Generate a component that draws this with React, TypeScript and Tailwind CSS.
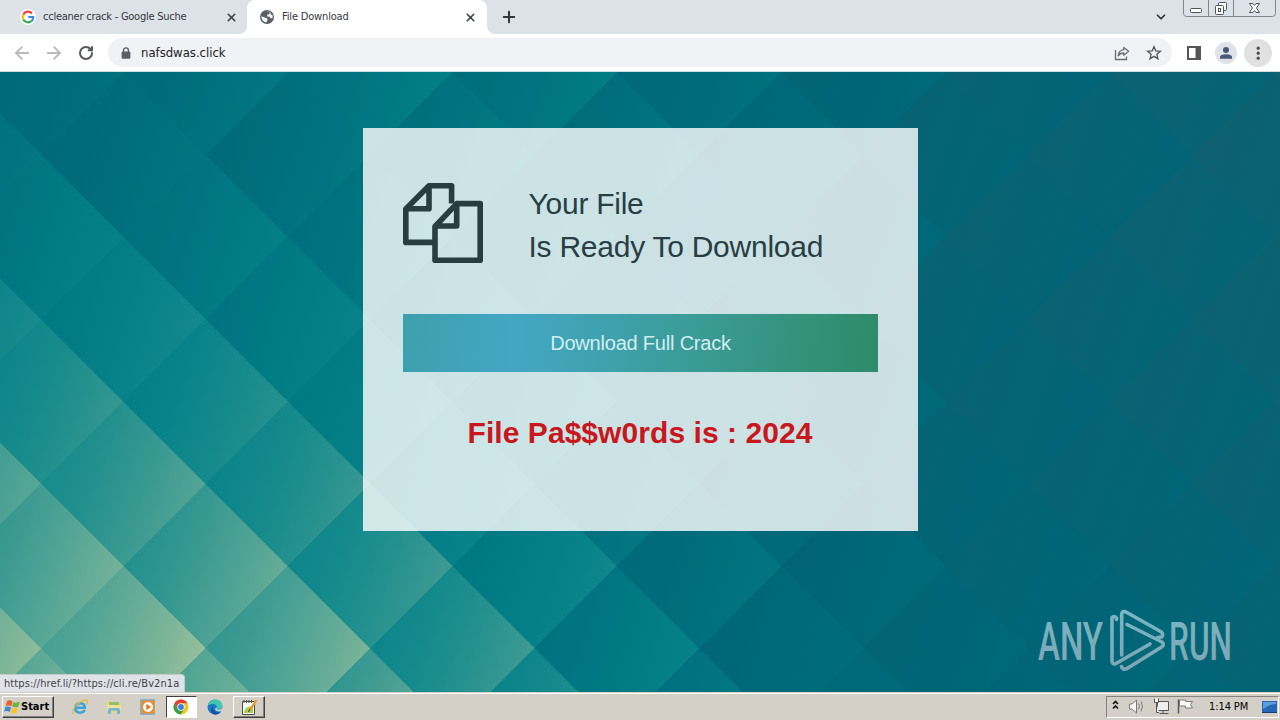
import React from "react";
import { ChevronDown, Plus, RotateCw, X } from "lucide-react";

// background lattice
const STEP = 164.5;
const COLS = [41, 205, 370, 534, 699, 863, 1028, 1192, 1356];
const ROWS = [72, 154, 320, 483, 648, 730];
const TONES = [
  [3.3, 3.5, 4.4, 4.6, 4, 3, 2.2, 1.9, 1.6],
  [3.9, 3.8, 4, 4.3, 4, 3.1, 2.1, 2, 1.6],
  [5.8, 5.6, 5, 4.7, 4, 3, 2, 1.9, 1.7],
  [8, 7.8, 6.9, 5.4, 4.2, 3, 2.2, 2.1, 1.9],
  [9.7, 9.9, 9, 7.1, 4.8, 3.1, 2.6, 2.5, 2.2],
  [10, 10, 9.4, 7.8, 5.4, 3.5, 2.8, 2.6, 2.3],
];
const PALETTE = [
  [27, 93, 107],
  [14, 97, 112],
  [0, 101, 119],
  [0, 108, 123],
  [0, 121, 131],
  [8, 131, 138],
  [29, 142, 141],
  [60, 154, 146],
  [90, 168, 150],
  [122, 180, 152],
  [153, 192, 154],
];

function locate(list: number[], v: number): [number, number] {
  const c = Math.min(Math.max(v, list[0]), list[list.length - 1]);
  let i = 0;
  while (i < list.length - 2 && c > list[i + 1]) i++;
  return [i, (c - list[i]) / (list[i + 1] - list[i])];
}

function toneAt(x: number, y: number): number {
  const [c, fx] = locate(COLS, x);
  const [r, fy] = locate(ROWS, y);
  const top = TONES[r][c] * (1 - fx) + TONES[r][c + 1] * fx;
  const bottom = TONES[r + 1][c] * (1 - fx) + TONES[r + 1][c + 1] * fx;
  return top * (1 - fy) + bottom * fy;
}

function color(t: number): string {
  const c = Math.min(Math.max(t, 0), 9.999);
  const i = Math.floor(c);
  const f = c - i;
  const rgb = PALETTE[i].map((v, k) =>
    Math.round(v * (1 - f) + PALETTE[i + 1][k] * f),
  );
  return `rgb(${rgb.join(",")})`;
}

const diamonds: { x: number; y: number; hi: number; lo: number }[] = [];
for (let row = -1; row < 10; row++) {
  const y = 72.3 + row * 82.3;
  const shift = row % 2 === 0 ? STEP / 2 : 0;
  for (let col = 0; col < 10; col++) {
    const x = 41 - shift + col * STEP;
    const hi = toneAt(x, y);
    diamonds.push({ x, y, hi, lo: hi - (hi * 0.24 + 0.2) });
  }
}

function Backdrop() {
  const h = STEP / 2 + 0.1;
  return (
    <svg
      className="absolute inset-0 h-full w-full"
      viewBox="0 72 1280 620"
      preserveAspectRatio="none"
      shapeRendering="crispEdges"
    >
      <defs>
        {diamonds.map(({ x, y, hi, lo }, idx) => (
          <linearGradient
            key={idx}
            id={`d${idx}`}
            gradientUnits="userSpaceOnUse"
            x1={x - STEP}
            y1={y}
            x2={x - STEP + 147}
            y2={y + 51}
          >
            {[0, 0.25, 0.5, 0.75, 1].map((s) => (
              <stop
                key={s}
                offset={s}
                stopColor={color(lo + (hi - lo) * Math.pow(s, 1.25))}
              />
            ))}
          </linearGradient>
        ))}
      </defs>
      {diamonds.map(({ x, y }, idx) => (
        <path
          key={idx}
          fill={`url(#d${idx})`}
          d={`M${x - STEP} ${y}L${x - STEP / 2} ${y - h}L${x} ${y}L${x - STEP / 2} ${y + h}Z`}
        />
      ))}
    </svg>
  );
}

function GoogleIcon() {
  return (
    <svg className="size-4" viewBox="0 0 16 16">
      <circle cx="8" cy="8" r="8" fill="#fff" />
      <g fill="none" strokeWidth="2.2">
        <path d="M12 4.4A5.4 5.4 0 0 0 3.3 5.4" stroke="#ea4335" />
        <path d="M3.3 5.4A5.4 5.4 0 0 0 3.3 10.6" stroke="#fbbc05" />
        <path d="M3.3 10.6A5.4 5.4 0 0 0 11.6 12" stroke="#34a853" />
        <path d="M11.6 12A5.2 5.2 0 0 0 13.2 8H8.2" stroke="#4285f4" />
      </g>
    </svg>
  );
}

function GlobeIcon() {
  return (
    <svg className="size-4" viewBox="0 0 16 16">
      <circle cx="8" cy="8" r="7" fill="#5a5e63" />
      <path
        d="M2.4 7.2L5.8 8.6L8 9.2L8.6 11L7.2 13.6A5.8 5.8 0 0 1 2.4 7.2ZM7.4 2.6Q9.2 2.2 11 3L10.4 5L8.2 5.8L8 7.4L10.6 7.8L11.6 9.6L13.6 9A5.8 5.8 0 0 0 13.4 6L11.8 5.6L11.6 3.4Z"
        fill="#f4f5f6"
      />
    </svg>
  );
}

function TabStrip() {
  return (
    <header className="flex h-[34px] bg-[#dde1e8] text-[11px] text-[#35383c]">
      <div className="flex w-[239px] items-center pl-5">
        <GoogleIcon />
        <span className="ml-[7px] w-[182px] tracking-[-0.24px] whitespace-nowrap">
          ccleaner crack - Google Suche
        </span>
        <X className="size-[13px] shrink-0 text-[#3c4043]" strokeWidth={3} />
      </div>
      <div className="w-2 self-end bg-white">
        <div className="h-2 rounded-br-lg bg-[#dde1e8]" />
      </div>
      <div className="flex w-60 items-center rounded-t-lg bg-white pl-3">
        <GlobeIcon />
        <span className="ml-[7px] w-[182px] tracking-[-0.17px] whitespace-nowrap">
          File Download
        </span>
        <X className="size-[13px] shrink-0 text-[#3c4043]" strokeWidth={3} />
      </div>
      <div className="w-2 self-end bg-white">
        <div className="h-2 rounded-bl-lg bg-[#dde1e8]" />
      </div>
      <div className="flex flex-1 items-center pl-[5px]">
        <Plus className="size-[18px] text-[#33363a]" strokeWidth={2.7} />
      </div>
      <ChevronDown
        className="mt-[10px] mr-[15px] size-[14px] text-[#33363a]"
        strokeWidth={3}
      />
      <WindowButtons />
    </header>
  );
}

function WindowButtons() {
  return (
    <svg className="mr-1 h-[18px] w-[93px]" viewBox="0 0 93 18" fill="none">
      <path
        d="M.5 0V13.5Q.5 16.5 3.5 16.5H89.5Q92.5 16.5 92.5 13.5V0M25.5 0V16M50.5 0V16"
        stroke="#83868c"
      />
      <g stroke="#50545b" fill="#fff">
        <rect x="7.5" y="8.5" width="11" height="4" rx="1" />
        <rect x="35.5" y="2.5" width="8" height="8" rx="1" />
        <rect x="32.5" y="5.5" width="8" height="9" rx="1" />
        <rect x="35.5" y="8.5" width="2" height="3" />
        <path d="M66.5 3.5H70L71.5 5.5L73 3.5H76.5L73.5 8L76.5 12.5H73L71.5 10.5L70 12.5H66.5L69.5 8Z" />
      </g>
    </svg>
  );
}

function Toolbar() {
  return (
    <nav className="flex h-[38px] items-center border-b border-[#d5dcdd] bg-white">
      <svg className="ml-[14px] h-4 w-12" viewBox="0 0 48 16" fill="none">
        <path
          d="M15 8H2M8.3 1.7L2 8L8.3 14.3M33 8H46M39.7 1.7L46 8L39.7 14.3"
          stroke="#b9bbbe"
          strokeWidth="1.9"
        />
      </svg>
      <RotateCw
        className="ml-4 size-4 text-[#55595e]"
        strokeWidth={3}
      />
      <div className="ml-[14px] flex h-[29px] w-[1064px] items-center rounded-full bg-[#f0f2f5] pr-[10px] pl-[13px]">
        <svg className="h-3 w-[10px]" viewBox="0 0 10 12">
          <path d="M2.6 5V3.3a2.4 2.4 0 0 1 4.8 0V5" fill="none" stroke="#5c6065" strokeWidth="1.4" />
          <rect x=".6" y="4.4" width="8.8" height="7.4" rx="1" fill="#5c6065" />
        </svg>
        <span className="ml-[10px] flex-1 text-[13px] tracking-[-0.02px] text-[#202124]">
          nafsdwas.click
        </span>
        <svg className="mr-4 -ml-px size-4" viewBox="0 0 16 16" fill="none" stroke="#6a6d72" strokeWidth="1.3">
          <path d="M1.5 5V14.5H12.5V11.5" />
          <path d="M9.8 2.5L14.6 6.3L9.8 10.2V8Q6.2 7.8 4.2 10.8Q4.8 5.2 9.8 4.7Z" strokeLinejoin="round" />
        </svg>
        <svg className="size-4" viewBox="0 0 16 16" fill="none">
          <path
            d="M8 1.8L9.8 5.9L14.3 6.3L10.9 9.3L11.9 13.7L8 11.3L4.1 13.7L5.1 9.3L1.7 6.3L6.2 5.9Z"
            stroke="#55595e"
            strokeWidth="1.4"
          />
        </svg>
      </div>
      <svg className="ml-[15px] h-[14px] w-[14px]" viewBox="0 0 14 14">
        <path fill="#55565a" fillRule="evenodd" d="M0 0H14V14H0ZM2 2V12H8.5V2Z" />
      </svg>
      <svg className="ml-[14px] size-[22px]" viewBox="0 0 22 22">
        <circle cx="11" cy="11" r="11" fill="#dfe2e7" />
        <circle cx="11" cy="8" r="3" fill="#4a5878" />
        <path d="M5 16.8V15Q5 12.4 11 12.2Q17 12.4 17 15V16.8Z" fill="#4a5878" />
      </svg>
      <svg className="ml-[7px] size-7" viewBox="0 0 28 28">
        <circle cx="14" cy="14" r="14" fill="#e1e1e1" />
        <g fill="#4b4c4f">
          <circle cx="14.2" cy="9.2" r="1.6" />
          <circle cx="14.2" cy="14.2" r="1.6" />
          <circle cx="14.2" cy="19.2" r="1.6" />
        </g>
      </svg>
    </nav>
  );
}

function FilesIcon() {
  return (
    <svg
      className="mt-px size-20"
      viewBox="0 0 80 80"
      fill="none"
      stroke="#273e41"
      strokeWidth="5.6"
      strokeLinejoin="round"
    >
      <path d="M48.6 20.5V2.8H26L2.8 26V59.4H32M26 2.8V25.7H2.8" />
      <path d="M53.7 20.6H77.2V77.2H32V43.5L53.7 20.6V43H32" />
    </svg>
  );
}

function DownloadCard() {
  return (
    <main className="relative h-[403px] w-[555px] bg-white/80 px-10 pt-[54px] font-['Liberation_Sans',Arial,sans-serif]">
      <div className="flex">
        <FilesIcon />
        <h1 className="ml-[46px] text-[30px] leading-[43px] tracking-[-0.25px] whitespace-nowrap text-[#273e43]">
          Your File
          <br />
          Is Ready To Download
        </h1>
      </div>
      <button className="mt-[46px] block h-[58px] w-full bg-[linear-gradient(97deg,#3da0ad_0%,#43a7c4_24%,#3b9c98_60%,#2f8c6a_97%)] pl-px text-xl tracking-[-0.2px] text-[#d2eef1]">
        Download Full Crack
      </button>
      <p className="mt-[43px] text-center text-[30px] leading-9 font-bold tracking-[0.06px] whitespace-nowrap text-[#c9171e]">
        File Pa$$w0rds is : 2024
      </p>
    </main>
  );
}

function Watermark() {
  return (
    <svg className="absolute right-0 bottom-[18px] h-[66px] w-[245px]" viewBox="0 0 245 66">
      <defs>
        <linearGradient id="wm" gradientUnits="userSpaceOnUse" x1="0" y1="0" x2="0" y2="66">
          <stop offset="0" stopColor="#79b7c2" />
          <stop offset="1" stopColor="#7fa3b3" />
        </linearGradient>
      </defs>
      <g
        fill="url(#wm)"
        fontFamily="Roboto, sans-serif"
        fontSize="53.5"
        fontWeight="500"
      >
        <text x="3" y="51.5" textLength="65" lengthAdjust="spacingAndGlyphs">
          ANY
        </text>
        <text x="134" y="51.5" textLength="63" lengthAdjust="spacingAndGlyphs">
          RUN
        </text>
      </g>
      <g fill="none" stroke="url(#wm)" strokeWidth="3.6" strokeLinejoin="round" strokeLinecap="round">
        <path d="M81.5 11.5V10Q79 7.500 77 9.500V53.500Q77.500 57 81 55.500L115 36" />
        <path d="M86.700 47V6Q87.500 2.500 91 4L126.500 24Q129 27 126.500 29L122.500 29.500" />
        <path d="M92 16.500L127 34Q129.500 36.500 127 38.800L92 60.500Q87.500 62.500 86.500 58.500" />
      </g>
    </svg>
  );
}

function Tray() {
  return (
    <div className="mr-px flex h-[22px] w-[173px] items-center border border-t-[#86837c] border-r-white border-b-white border-l-[#86837c] text-[11px]">
      <svg className="mt-px ml-1 h-5 w-[84px]" viewBox="0 0 84 20" fill="none">
        <path d="M2 7L4.500 4.500L7 7M2 11.500L4.500 9L7 11.500" stroke="#111" strokeWidth="1.6" />
        <g stroke="#77797a">
          <path d="M18.500 7H21L25.500 3V16L21 12H18.500Z" fill="#f7f7f7" />
          <path d="M27.500 6.500Q29.500 9.500 27.500 12.500M30 4.500Q33 9.500 30 14.500" />
          <path d="M46.500 4.500H57.500V13.500H46.500ZM48.500 16.500H57.500M52 14V16" fill="#eee" stroke="#55585a" />
          <path d="M43.500 1.500V5.500H47.500V1.500M45.500 6V15.500H48" fill="#f5f5f5" stroke="#55585a" />
          <path d="M67.500 2.500V16.500" stroke="#55585a" strokeWidth="1.500" />
          <path d="M68.500 3H74.500V4.500H81.500L79.500 7.500L81.500 11H74.500V9H68.500Z" fill="#fafafa" />
        </g>
      </svg>
      <span className="ml-[14px] w-[50px] pt-[2px] tracking-[-0.1px] whitespace-nowrap text-black">1:14 PM</span>
      <svg className="ml-auto size-4" viewBox="0 0 16 16">
        <rect x="0" y="2" width="15" height="11" fill="#2467b5" />
        <path d="M1 3H14V5Q8 5 1 10Z" fill="#5d9ddb" />
        <path d="M0 13H15V14H0Z" fill="#173e70" />
      </svg>
    </div>
  );
}

function Taskbar() {
  return (
    <footer className="flex h-7 items-center border-t border-[#d4d0c8] bg-[#d4d0c8] shadow-[inset_0_1px_0_#fff]">
      <button className="ml-[2px] flex h-[22px] w-[52px] items-center border border-t-white border-r-[#404040] border-b-[#404040] border-l-white pl-px text-[11px] font-bold text-black shadow-[inset_-1px_-1px_0_#808080]">
        <svg className="size-4 shrink-0" viewBox="0 0 16 16">
          <path d="M3 2Q6 .5 8.500 2.500L7.300 7.300Q5 5.800 1.800 6.800Z" fill="#e8602c" />
          <path d="M9.300 3Q12 4.500 15.800 2.500L14.300 7.700Q11.300 9 8.100 7.600Z" fill="#6db33f" />
          <path d="M1.500 7.800Q4.700 6.800 7 8.400L5.800 13Q3.300 11.500 .2 12.500Z" fill="#3c8ad0" />
          <path d="M7.900 8.800Q11 10.200 14 8.800L12.700 13.800Q9.500 15 6.700 13.500Z" fill="#f5c32c" />
        </svg>
        <span className="pt-[2px] pl-px">Start</span>
      </button>
      <svg className="ml-[17px] size-[18px]" viewBox="0 0 18 18" fill="none">
        <path d="M4.300 9.800H13.800Q14 5.200 9.200 5.200Q4.300 5.500 4.300 10Q4.500 14.500 9.200 14.700Q12.500 14.500 13.800 12" stroke="#39a3dc" strokeWidth="2.600" />
        <path d="M2.500 16Q0 14.500 4 8.500Q10 2 15.500 2Q17.500 3 15 6.500" stroke="#e4b93c" strokeWidth="1.300" />
      </svg>
      <svg className="ml-4 size-[18px]" viewBox="0 0 18 18">
        <path d="M2 3H8L9 5H16V15H2Z" fill="#edd477" />
        <path d="M4 4H14V7H4Z" fill="#8ac26d" />
        <path d="M2 7H16V12H2Z" fill="#f3e196" />
        <path d="M3 16V12Q3 10 5 10H13Q15 10 15 12V16H12V12.500H6V16Z" fill="#73b4de" />
      </svg>
      <svg className="ml-4 size-[18px]" viewBox="0 0 18 18">
        <rect x="1" y="1" width="15" height="16" rx="1" fill="#7fb0d8" />
        <rect x="2.500" y="2.500" width="13" height="13" fill="#f08c22" />
        <circle cx="9" cy="9" r="5" fill="#fff" />
        <path d="M7.300 5.800L12 9L7.300 12.200Z" fill="#e57612" />
      </svg>
      <div className="ml-[9px] flex h-[22px] w-[31px] items-center justify-center border border-t-[#404040] border-r-white border-b-white border-l-[#404040] bg-white pr-[2px]">
        <svg className="size-4" viewBox="0 0 16 16">
          <circle cx="8" cy="8" r="7.500" fill="#f8c51c" />
          <path d="M1.500 4.250A7.500 7.500 0 0 1 14.500 4.250H8L4.750 9.900Z" fill="#df4332" />
          <path d="M1.500 4.250A7.500 7.500 0 0 0 7.600 15.500L11.250 9.900L8 11.700L4.750 9.900Z" fill="#2e9e4f" />
          <circle cx="8" cy="8" r="3.700" fill="#fff" />
          <circle cx="8" cy="8" r="2.900" fill="#3b7de0" />
        </svg>
      </div>
      <svg className="ml-[10px] size-4" viewBox="0 0 16 16">
        <circle cx="8" cy="8" r="7.500" fill="#1b78c8" />
        <path d="M.8 6.500Q3 .5 8.500 .5Q15 1 15.500 7Q15 10.500 11 10.500Q9 10 9.800 8.500Q10 5.500 6.800 5Q3 4.500 .8 6.500Z" fill="#43c6b0" />
        <path d="M6 7Q5 12 10 13.500Q12.500 14 14.500 12Q11 17 6.500 15Q2 12 6 7Z" fill="#124f9c" />
        <path d="M9.800 8.500Q9 10.500 11.500 10.700Q14.500 10.700 15.500 8.500V11.500L13 12.500Q8 12.500 8 9.500Z" fill="#d4d0c8" />
      </svg>
      <div className="ml-[10px] flex h-[22px] w-8 items-center justify-center border border-t-white border-r-[#404040] border-b-[#404040] border-l-white shadow-[inset_-1px_-1px_0_#808080]">
        <svg className="size-[18px]" viewBox="0 0 18 18">
          <path d="M2.500 3.500H14.500V16.500H2.500Z" fill="#f5f8ef" stroke="#4a5145" />
          <path d="M4 14Q5 8 13 8V15H4Z" fill="#a8cf54" />
          <path d="M4 2V5M6.500 2V5M9 2V5M11.500 2V5" stroke="#4c4c4c" />
          <path d="M16.500 2L9.500 12.500" stroke="#eb9a25" strokeWidth="2.200" />
          <path d="M9.800 11L8.500 14" stroke="#403b35" />
        </svg>
      </div>
      <div className="ml-auto">
        <Tray />
      </div>
    </footer>
  );
}

export default function App(): React.JSX.Element {
  return (
    <div className="flex h-[720px] w-[1280px] flex-col overflow-hidden font-['DejaVu_Sans_Condensed','Noto_Sans',sans-serif]">
      <TabStrip />
      <Toolbar />
      <section className="relative flex flex-1 items-start justify-center overflow-hidden pt-14">
        <Backdrop />
        <DownloadCard />
        <Watermark />
        <div className="absolute bottom-0 left-0 h-[18px] w-[185px] rounded-tr border-t border-r border-[#c4c9cc] bg-[#dfe2e7] pl-1 text-[11px] leading-[17px] tracking-[0.09px] whitespace-nowrap text-[#3f4347]">
          https://href.li/?https://cli.re/Bv2n1a
        </div>
      </section>
      <Taskbar />
    </div>
  );
}
